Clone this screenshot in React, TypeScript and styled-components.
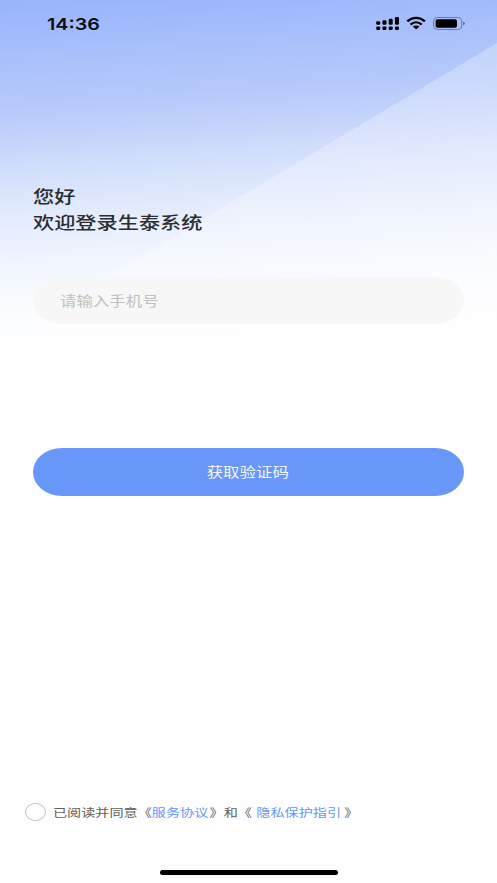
import React, { useState } from "react";
import styled, { createGlobalStyle } from "styled-components";

const GlobalStyle = createGlobalStyle`
  * { box-sizing: border-box; }
  body { margin: 0; background: #fefefe; }
`;

const Screen = styled.div`
  width: 497px;
  height: 883px;
  display: flex;
  flex-direction: column;
  overflow: hidden;
  font-family: "Noto Sans CJK SC", "Noto Sans", sans-serif;
  background:
    linear-gradient(to bottom right, transparent 49.9%, rgba(255, 255, 255, 0.27) 50.1%) 0 43px / 497px 298px no-repeat,
    linear-gradient(176deg, #98b4fb 0%, #a7bffb 15%, #b4c8fa 28%, #c1d0fb 36%, #d7e3fb 50%, #e3ebfc 59%, #f1f5fe 72%, #fafcff 85%, #fefefe 94%) 0 0 / 497px 336px no-repeat,
    #fefefe;
`;

const StatusBar = styled.header`
  height: 47px;
  padding: 0 32px 0 47px;
  display: flex;
  align-items: center;
  justify-content: space-between;
`;

const Stretch = styled.span<{ $x?: number; $center?: boolean }>`
  display: inline-block;
  white-space: pre;
  transform: scaleX(${(p) => p.$x ?? 1.218});
  transform-origin: ${(p) => (p.$center ? "center" : "left center")};
`;

const Clock = styled.div`
  font: 600 16.5px/24px Inter, sans-serif;
  color: #080c14;
`;

const Indicators = styled.svg`
  display: block;
  width: 90px;
  height: 16px;
`;

const Greeting = styled.h1`
  margin: 136px 33px 0;
  font-size: 17.4px;
  font-weight: 500;
  line-height: 26px;
  color: #2b2d31;
`;

const Line = styled.div`
  height: 26px;
`;

const PhoneField = styled.label`
  height: 47.5px;
  margin: 41.5px 33px 0;
  padding: 0 0 1px 27px;
  display: flex;
  align-items: center;
  border-radius: 29px / 24px;
  background: #f7f7f7;
`;

const PhoneInput = styled.input`
  width: 320px;
  padding: 0;
  border: 0;
  outline: 0;
  background: transparent;
  font: 400 13.5px/20px "Noto Sans CJK SC", sans-serif;
  color: #333;
  transform: scaleX(1.218);
  transform-origin: left center;
  &::placeholder { color: #c0c0c0; opacity: 1; }
`;

const SubmitButton = styled.button`
  height: 47.5px;
  margin: 124px 33px 0;
  padding: 0 1px 1px 0;
  border: 0;
  border-radius: 29px / 24px;
  background: #6797f8;
  color: #fff;
  font: 350 13.5px/20px "Noto Sans CJK SC", sans-serif;
`;

const Agreement = styled.div`
  margin: auto 25px 0;
  height: 20px;
  display: flex;
  align-items: center;
  gap: 7px;
  font-size: 11.6px;
  line-height: 20px;
  color: #606060;
`;

const Radio = styled.button<{ $on: boolean }>`
  width: 21px;
  height: 18px;
  padding: 0;
  border: 1px solid #bfbfbf;
  border-radius: 50%;
  background: ${(p) => (p.$on ? "#6797f8" : "transparent")};
`;

const Terms = styled(Stretch)`
  margin-top: -1px;
`;

const Policy = styled.span<{ $before?: number; $after?: number }>`
  margin-left: ${(p) => p.$before ?? 0}px;
  margin-right: ${(p) => p.$after ?? 0}px;
  color: #6797f8;
`;

const HomeIndicator = styled.div`
  width: 178px;
  height: 5px;
  margin: 48px auto 8px 160px;
  border-radius: 3px;
  background: #000;
`;

const barTops = [5.2, 4.2, 2.8, 1];

function StatusIcons() {
  return (
    <Indicators viewBox="0 0 90 16" fill="#000">
      {barTops.map((y, i) => (
        <g key={y}>
          <rect x={1.2 + i * 6.25} y={y} width="4" height={8.8 - y} rx="1.2" />
          <rect x={1.2 + i * 6.25} y="10.4" width="4" height="3.6" rx="1.2" />
        </g>
      ))}
      <g fill="none" stroke="#000" strokeWidth="2.3">
        <path d="M32.3 5.4C37.4 0.7 44.8 0.7 49.9 5.4" />
        <path d="M35.5 8.6C38.9 5.5 43.3 5.5 46.7 8.6" />
      </g>
      <path d="M37.8 10.6C39.7 9 42.5 9 44.4 10.6L41.1 13.4Z" />
      <rect x="58.6" y="1.5" width="28.2" height="12" rx="4" ry="3.4" fill="none" stroke="#5f75a8" strokeWidth="0.9" />
      <rect x="60.6" y="3.3" width="21.4" height="8.5" rx="2" />
      <path d="M88.1 5.7Q89.9 6.2 89.9 7.5T88.1 9.4Z" fill="#526ba2" />
    </Indicators>
  );
}

export default function App() {
  const [agreed, setAgreed] = useState(false);
  return (
    <>
      <GlobalStyle />
      <Screen>
        <StatusBar>
          <Clock><Stretch $x={1.19}>14:36</Stretch></Clock>
          <StatusIcons />
        </StatusBar>
        <Greeting>
          <Line><Stretch>您好</Stretch></Line>
          <Line><Stretch>欢迎登录生泰系统</Stretch></Line>
        </Greeting>
        <PhoneField>
          <PhoneInput type="tel" placeholder="请输入手机号" />
        </PhoneField>
        <SubmitButton><Stretch $center>获取验证码</Stretch></SubmitButton>
        <Agreement>
          <Radio $on={agreed} aria-label="同意" onClick={() => setAgreed(!agreed)} />
          <Terms>
            已阅读并同意《<Policy $after={1}>服务协议</Policy>》和《 <Policy $before={1}>隐私保护指引</Policy> 》
          </Terms>
        </Agreement>
        <HomeIndicator />
      </Screen>
    </>
  );
}
